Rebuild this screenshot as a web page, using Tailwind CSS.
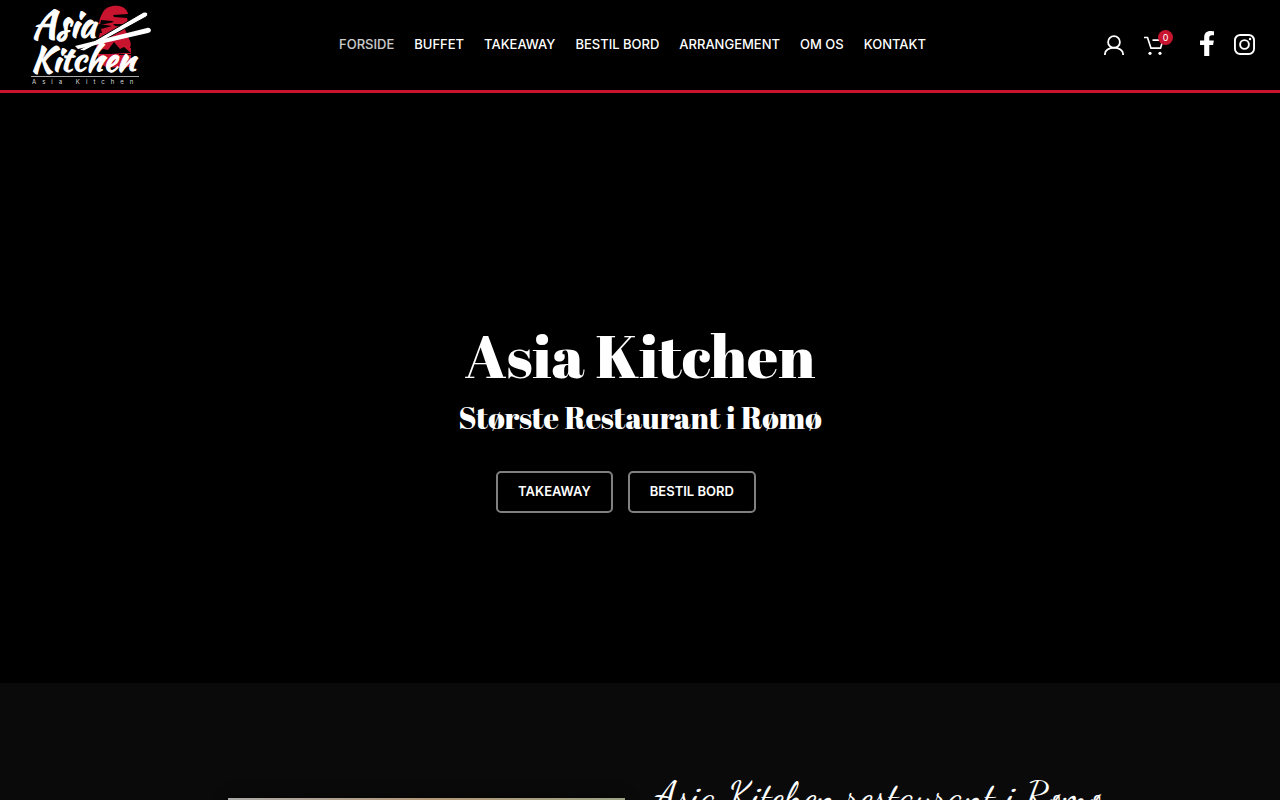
<!DOCTYPE html>
<html lang="da">
<head>
<meta charset="utf-8">
<meta name="viewport" content="width=device-width, initial-scale=1">
<title>Asia Kitchen</title>
<script src="https://cdn.jsdelivr.net/npm/@tailwindcss/browser@4"></script>
</head>
<body class="flex h-screen flex-col overflow-hidden bg-[#0a0a0a] font-['Inter',sans-serif] text-white">
<header class="flex shrink-0 items-center border-b-3 border-[#c8142f] bg-black pr-[25px] pl-[30px]">
  <div class="flex flex-1">
    <a href="#" aria-label="Asia Kitchen">
      <svg class="block h-[90px] w-[124px]" viewBox="30 0 124 90" role="img">
        <!-- red figure -->
        <path fill="#c8142f" d="M103 12C106 7 112 5 119 6C125 7 128 11 128 15L114 16V17L127 18L128 22L127 24H113L115 26L125 27C124 30 128 34 129 39C132 44 131 48 127 52H96C96 45 99 37 100 33H102L101 29L112 26L99 24C99 19 101 16 103 12Z"/>
        <path fill="#c8142f" d="M98 48H131V66C128 68 117 68 106 67L98 62Z"/>
        <path fill="#000" d="M99 52L103 49L108 50L114 42L120 49L124 47L131 53H124L111 54H99ZM119 54H131V55H119Z"/>
        <path fill="#000" d="M101 20L112 21L114 22L100 25ZM113 15L128 14V17L114 17Z"/>
        <g fill="#fff" stroke="#fff" stroke-width="1" font-family="Kaushan Script, Caveat Brush, Permanent Marker, Lato, sans-serif">
          <text x="32" y="37" font-size="38">Asia</text>
          <text x="31" y="71" font-size="34">Kitchen</text>
        </g>
        <!-- chopsticks -->
        <path fill="#fff" stroke="#000" stroke-width="1" d="M79 50L142 13C146 10 150 14 146 17L84 51Z"/>
        <path fill="#fff" d="M75 46L147 28C151 27 153 32 148 33L78 49Z"/>
        <path stroke="#aaa" stroke-width="1" d="M31 76.500H139"/>
        <text x="32" y="84" font-size="6" font-family="Inter, sans-serif" fill="#ddd" class="tracking-[6px]">Asia Kitchen</text>
      </svg>
    </a>
  </div>
  <nav class="flex gap-5 pr-5 pb-0.5 text-[13px] leading-5 font-medium whitespace-nowrap">
    <a href="#" class="text-white/80">FORSIDE</a>
    <a href="#">BUFFET</a>
    <a href="#">TAKEAWAY</a>
    <a href="#">BESTIL BORD</a>
    <a href="#">ARRANGEMENT</a>
    <a href="#">OM OS</a>
    <a href="#">KONTAKT</a>
  </nav>
  <div class="flex flex-1 items-center justify-end">
    <a href="#" aria-label="Min konto" class="mr-5">
      <svg class="h-5 w-5" viewBox="0 0 20 20" fill="none" stroke="#fff" stroke-width="1.800"><circle cx="10" cy="7" r="5.900"/><path d="M.9 20V19A9.100 6.300 0 0 1 19.100 19V20"/></svg>
    </a>
    <a href="#" aria-label="Kurv" class="relative mr-9">
      <svg class="h-5 w-5" viewBox="0 0 20 20" fill="none" stroke="#fff" stroke-width="1.700"><path d="M0 2.500H3.500L7 13.200H16.500L19 5.200H8.500"/><circle cx="6" cy="18.300" r="1.600" fill="#fff" stroke="none"/><circle cx="16" cy="18.300" r="1.600" fill="#fff" stroke="none"/></svg>
      <span class="absolute -top-[5px] left-3.5 h-[15px] w-[15px] rounded-full bg-[#c8142f] text-center text-[9px] leading-[15px]">0</span>
    </a>
    <a href="#" aria-label="Facebook" class="mr-5">
      <svg class="mb-1 h-[25px] w-[14px]" viewBox="22 0 275 512" preserveAspectRatio="none" fill="#fff"><path d="M279.140 288l14.220-92.660h-88.910v-60.130c0-25.350 12.420-50.060 52.240-50.060h40.420V6.260S260.430 0 225.360 0c-73.220 0-121.080 44.380-121.080 124.720v70.620H22.890V288h81.390v224h100.170V288z"/></svg>
    </a>
    <a href="#" aria-label="Instagram">
      <svg class="mb-0.5 h-[21px] w-[21px]" viewBox="0 0 22 22" fill="none" stroke="#fff" stroke-width="2"><rect x="1" y="1" width="20" height="20" rx="5.500"/><circle cx="11" cy="11" r="4.600"/><circle cx="16.800" cy="5.200" r="1.300" fill="#fff" stroke="none"/></svg>
    </a>
  </div>
</header>
<main class="flex-1">
  <section class="flex flex-col items-center bg-black pt-[224px] pb-[170px] text-center">
    <h1 class="font-['Abril_Fatface','Liberation_Serif',serif] text-[60px] leading-[76px]">Asia Kitchen</h1>
    <h2 class="mt-1.5 font-['Abril_Fatface','Liberation_Serif',serif] text-[30px] leading-[38px]">Største Restaurant i Rømø</h2>
    <div class="mt-[34px] flex gap-[15px] pr-7 text-[13px] leading-[18px] font-semibold">
      <button type="button" class="rounded-[5px] border-2 border-white/50 px-5 pt-[9px] pb-[11px]">TAKEAWAY</button>
      <button type="button" class="rounded-[5px] border-2 border-white/50 px-5 pt-[9px] pb-[11px]">BESTIL BORD</button>
    </div>
  </section>
  <section class="mx-auto flex max-w-[824px] gap-[30px] pt-[85px]">
    <div class="mt-[30px] h-80 w-[397px] shrink-0 bg-linear-to-r from-[#aaa9a7] via-[#b39878] to-[#9ba384] shadow-[0_0_12px_rgba(0,0,0,0.5)]"></div>
    <h3 class="flex-1 font-['Dancing_Script','Liberation_Serif',serif] text-[40px] leading-[56px] whitespace-nowrap">Asia Kitchen restaurant i Rømø</h3>
  </section>
</main>
</body>
</html>
